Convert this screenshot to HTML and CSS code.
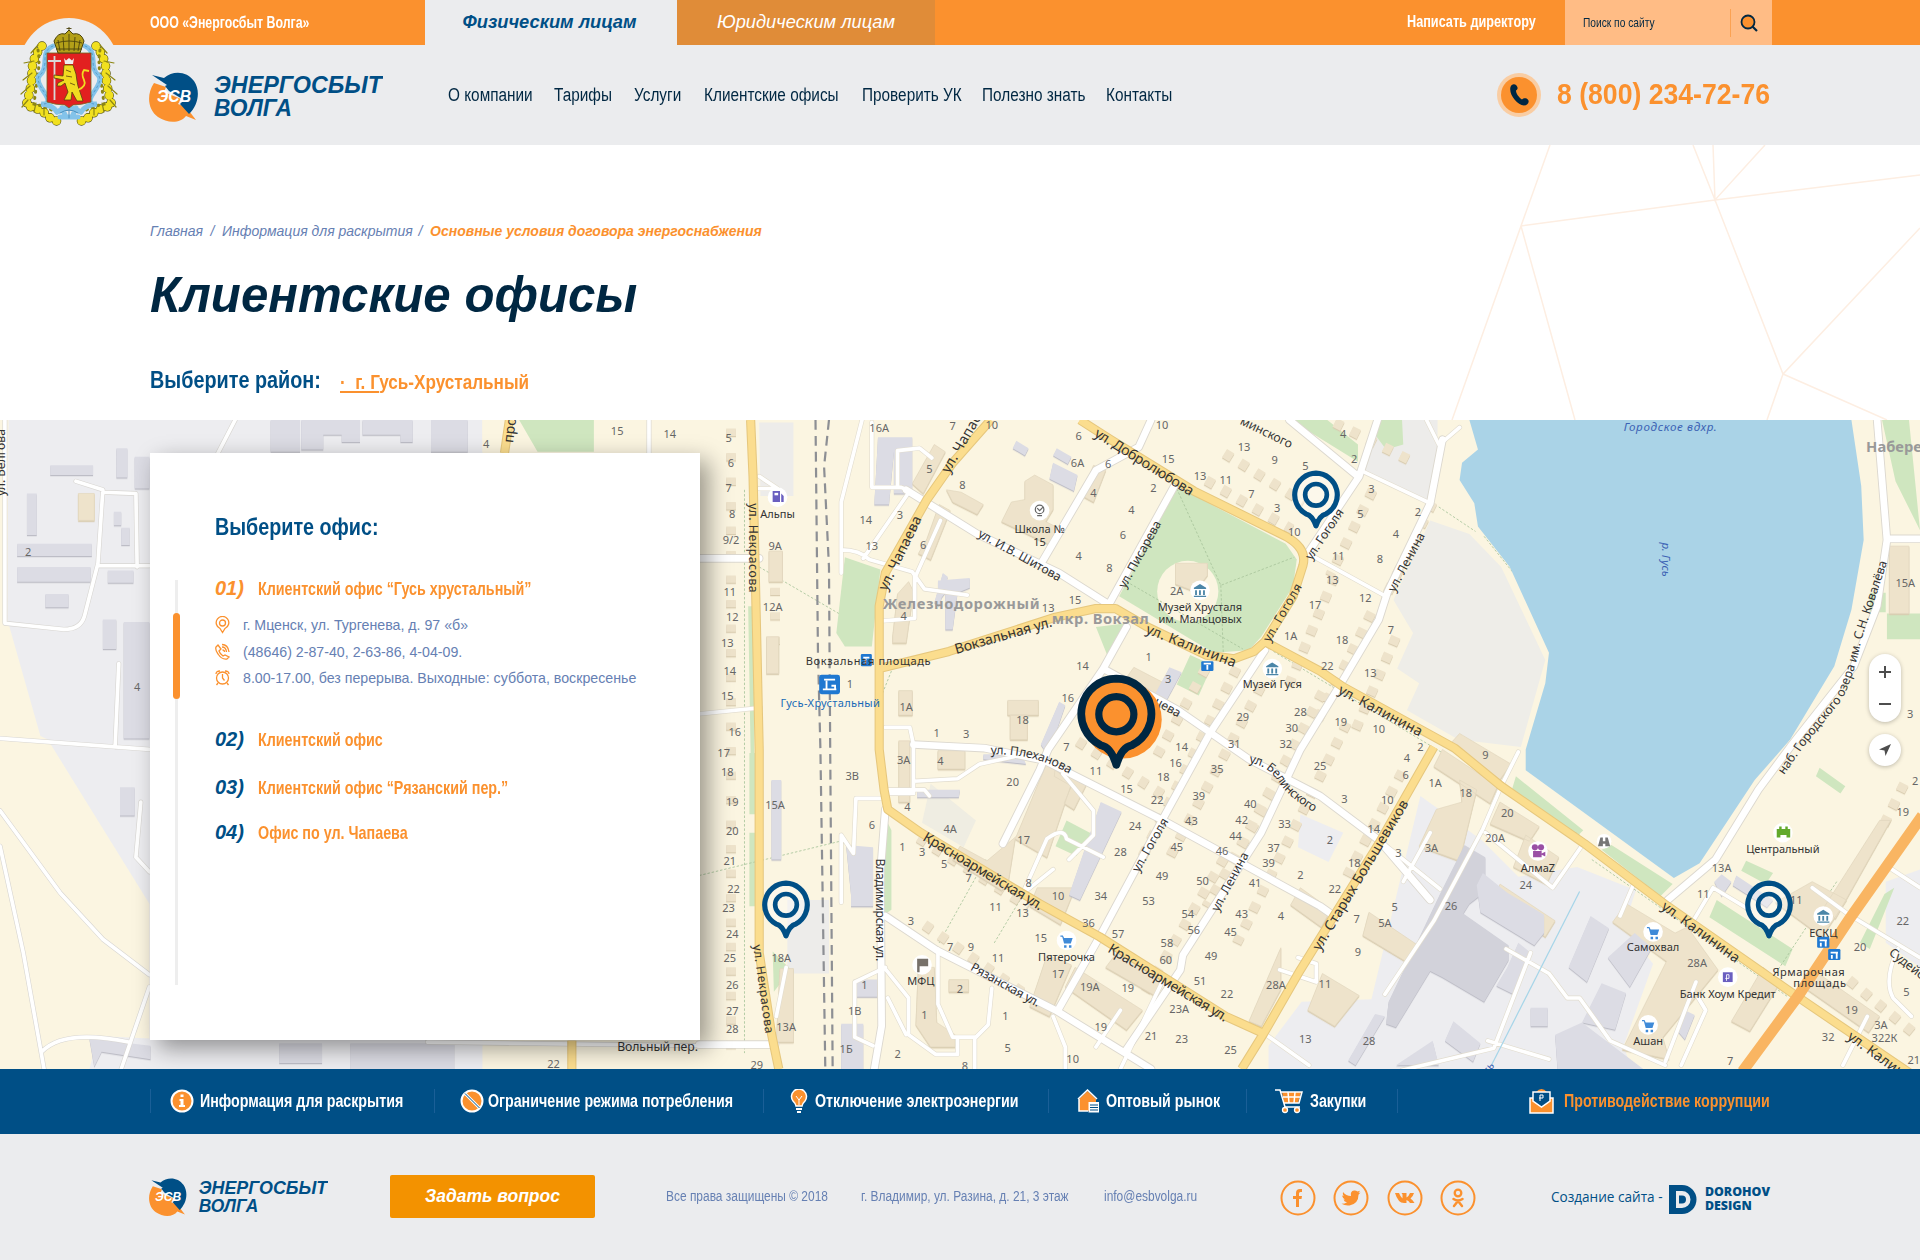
FILE: index.html
```
<!DOCTYPE html>
<html lang="ru">
<head>
<meta charset="utf-8">
<title>Клиентские офисы — Энергосбыт Волга</title>
<link rel="stylesheet" href="styles.css">
</head>
<body>
<svg class="defs" width="0" height="0" aria-hidden="true">
  <symbol id="logo" viewBox="0 0 234 52">
    <path fill="#fb912e" d="M5 12C-3 24-1 39 9 46C19 53 32 52 37 45L47 49L37 36L29 33L32 28L15 21L17 16Z"/>
    <path fill="#004f86" d="M3 4L15 7C24-1 38 0 45 10C52 20 49 35 40 43L31 33L35 29L20 20L16 15L18 14Z"/>
    <text class="logo-mark" x="8" y="31" textLength="34" lengthAdjust="spacingAndGlyphs">ЭСВ</text>
    <text class="logo-name" x="65" y="22" textLength="168" lengthAdjust="spacingAndGlyphs">ЭНЕРГОСБЫТ</text>
    <text class="logo-name" x="65" y="45" textLength="78" lengthAdjust="spacingAndGlyphs">ВОЛГА</text>
  </symbol>
  <symbol id="pin" viewBox="0 0 48 58">
    <path d="M24 3a21 21 0 0 1 9.500 39.500q-6 1.500-9.500 11.500q-3.500-10-9.500-11.500A21 21 0 0 1 24 3z" fill="#fff" fill-opacity=".35" stroke="#004f86" stroke-width="5" stroke-linejoin="round"/>
    <circle cx="24" cy="24" r="10.500" fill="none" stroke="#004f86" stroke-width="4.500"/>
  </symbol>
</svg>

<header class="header">
  <div class="topbar">
    <span class="company">ООО «Энергосбыт Волга»</span>
    <a class="tab tab-active">Физическим лицам</a>
    <a class="tab tab-legal">Юридическим лицам</a>
    <a class="director">Написать директору</a>
    <div class="search">
      <span class="search-text">Поиск по сайту</span>
      <i class="search-line"></i>
      <svg class="search-icon" width="20" height="20" viewBox="0 0 20 20"><circle cx="9" cy="9" r="6.500" fill="#fb912e" stroke="#002742" stroke-width="1.800"/><path d="M13.500 13.500L18 18" stroke="#002742" stroke-width="2.200"/></svg>
    </div>
  </div>
  <div class="mainbar">
    <svg class="logo" width="234" height="52"><use href="#logo"/></svg>
    <nav class="nav">
      <a class="w84">О компании</a><a class="w58">Тарифы</a><a class="w48">Услуги</a><a class="w136">Клиентские офисы</a><a class="w98">Проверить УК</a><a class="w102">Полезно знать</a><a class="w66">Контакты</a>
    </nav>
    <svg class="phone-icon" width="44" height="44" viewBox="0 0 44 44"><circle cx="22" cy="22" r="22" fill="#f9cda3"/><circle cx="22" cy="22" r="18" fill="#fb912e"/><path d="M13.500 14c1-3 4-3.500 6-1.500c2 2.500 1 4-.5 5c0 3 3 7 6 9c1.500-1.500 5-2 6.500 1c.8 2.500-1.500 5-4.500 5C20 32 11.500 21 13.500 14z" fill="#002742"/></svg>
    <span class="phone">8 (800) 234-72-76</span>
  </div>
  <svg class="arms" width="102" height="112" viewBox="18 16 102 112">
    <circle cx="69" cy="68" r="50" fill="#ebecee"/>
    <g fill="none" stroke-linecap="round">
      <path d="M42 46Q32 58 32 72T26 106Q40 108 48 116T62 119M96 46Q106 58 106 72T112 106Q98 108 90 116T76 119" stroke="#55520e" stroke-width="9.500" stroke-dasharray="0 7.500"/>
      <path d="M42 46Q32 58 32 72T26 106Q40 108 48 116T62 119M96 46Q106 58 106 72T112 106Q98 108 90 116T76 119" stroke="#f1e01f" stroke-width="8.200" stroke-dasharray="0 7.500"/>
      <path d="M38 45l-7 8m3 8l-10 2m8 10l-9 7m7 6l-9 8m7 6l-6 7m14-4l-2 9m10-5v8M100 45l7 8m-3 8l10 2m-8 10l9 7m-7 6l9 8m-7 6l6 7m-14-4l2 9m-10-5v8" stroke="#8d8614" stroke-width="1.200"/>
      <path d="M38 50Q40 60 38 74T34 104Q44 106 56 112M100 50Q98 60 100 74T104 104Q94 106 82 112" stroke="#8d8614" stroke-width="3" stroke-dasharray="1 5"/>
      <path d="M53 46q-8 3-8 14t-5 15t4 17t-3 12q12 1 16 8M85 46q8 3 8 14t5 15t-4 17t3 12q-12 1-16 8" stroke="#83c3ea" stroke-width="5"/>
      <path d="M53 46q-8 3-8 14t-5 15t4 17t-3 12M85 46q8 3 8 14t5 15t-4 17t3 12" stroke="#4b8fbd" stroke-width=".8" stroke-dasharray="2 3"/>
      <path d="M57 112q12-8 24 0M62 108l4 9m10-9l-4 9M60 117h18" stroke="#83c3ea" stroke-width="5"/>
      <path d="M60 113q9-6 18 0M69 110v8" stroke="#4b8fbd" stroke-width="1"/>
    </g>
    <path d="M47 53h44v49q-10 3-18 3l-4 3l-4-3q-9 0-18-3z" fill="#e22020" stroke="#6f6420" stroke-width=".8"/>
    <path d="M58 53l-4-12q4-9 11-7l4-4l4 4q8-2 11 7l-4 12z" fill="#b3a018" stroke="#4b430c"/>
    <path d="M69 31v-4m-2.500 1.500h5M60 51l-2-11m6 11l-1-14m6 14v-17m5 17l1-14m3 14l2-11M56 49h26M56 43q13-4 26 0" stroke="#4b430c" fill="none" stroke-width=".9"/>
    <path d="M54.500 56v44M48 61h13" stroke="#d8d8d8" stroke-width="1.800"/>
    <path d="M64 58l2 2.500 3-2.500 3 2.500 2-2.500-1 6h-8z" fill="#eee"/>
    <path d="M64 65h9l3 9q1 8 2 12l5 15h-6l-5-9-1 8h-7l4-8-3-9-4 3h-4l1-3 6-3-10-2v-3l9 1z" fill="#f1dc20" stroke="#58420e" stroke-width=".8"/>
    <path d="M78 90q9-4 6-10t0-10l5 1" fill="none" stroke="#f1dc20" stroke-width="1.800"/>
    <path d="M66 70l5 2m-5 4l6 1m-2 6l5 2" stroke="#58420e" stroke-width=".8"/>
  </svg>
</header>

<main>
  <section class="intro">
    <svg class="mesh" width="470" height="275" viewBox="1450 145 470 275" fill="none" stroke="#fdeee2" stroke-width="1.500"><path d="M1550 145L1521 226L1452 420M1521 226L1575 420M1521 226L1715 200L1920 175M1693 145L1715 200L1783 374L1920 228M1713 145L1715 200L1765 145M1783 374L1767 420M1783 374L1887 420"/></svg>
    <div class="crumbs"><span class="w53">Главная</span><i class="slash">/</i><span class="w188">Информация для раскрытия</span><i class="slash">/</i><b>Основные условия договора энергоснабжения</b></div>
    <h1>Клиентские офисы</h1>
    <div class="district"><span class="district-label">Выберите район:</span><a class="district-name"><u>·&nbsp; г. Г</u>усь-Хрустальный</a></div>
  </section>

  <section class="map">
    <svg class="map-canvas" width="1920" height="649" viewBox="0 343 1568 530" preserveAspectRatio="none">
      <defs>
        <path id="streets" d="M940 343L930 365L895 384L851 459M959 397L906 493M920 512L901 546L856 612L849 629L819 689M740 400L798 436L865 468L906 494M1125 343L1110 389L1068 452M1033 531L988 599L949 670L898 765L864 825M1178 359L1168 411L1133 484L1126 506L1097 555L1062 612L1030 680L966 780L964 792L920 857M746 608L804 611L853 621L950 670L1078 740L1091 749M901 546L962 580L1020 620L1078 650L1126 686L1168 735M723 748L765 776L862 825L940 873M723 661L719 713L720 838L714 873M571 456h49M571 853h62M1533 343L1541 441L1533 495L1514 544L1462 610L1436 645L1401 702L1362 735M1541 440h27M1053 343l56 46"/>
        <path id="lanes" d="M4 343V509L52 514Q66 514 69 503L80 460L84 400L62 393M84 402L111 403L112 463M81 462H122M97 542L94 610M0 603L122 612M0 662L49 729L84 767L122 796M0 691L19 778L36 873M122 806L99 873M34 859Q52 840 105 851M115 655L111 700L122 712M349 851L571 854M530 343v30M178 370l14-27"/>
        <path id="drives" d="M704 343L687 410V468M712 345V398h24l7 3L705 456M733 398V368l18-2l10 8M687 449q15 0 23 8l35 10l10 14l35 5M747 470v35l-26 2M768 425l-20 45M620 389l15 10h-15M571 583l50-5M723 594h20l3 14v40h-22M725 645h30l4 5M746 638l36-2l18-12l28-6M719 652h-20l-2 45l-10-15v55M723 790l-25 12v45l15 7M722 790l20 25v30l22 16h18v-14h15l10-10l3-30M766 775v45l12 27h18v26M642 790l-8 40M860 710l-25 20l20-45q14-10 16 0l30 15M868 632l25 30v20l-20 20M895 855l20-30M860 830l10 25v18M950 800l-35 73M1113 385l55 26M1068 452l62 34M1168 411l10-50l14-12M1165 343l10 20M1226 642l-15 35l-40 75l-40 60M1240 614l-15 30M1213 680l55 45l25-36M1126 686l50 40M1168 680l-22 40M1335 720l-12 28M1384 750l15-25l30 18M1230 775l35 20l15 20h10l25 35l45 20M1250 778l-30 78l-75 18M1215 850l50 15M1480 725l30 22l58 35M1545 710l23 15M1525 830l-20 40M1385 802l-25 65M1387 815l6 10l-20 45M740 845l-15-30M1034 845l35 25M1060 782l15 5v15l-30-10M1550 775q-12 25-4 40l15 15"/>
        <path id="avenues" d="M613 343L615 389L620 612V778L630 844L636 873M809 343L778 378L757 408L723 468L718 495V612L722 645L725 661L752 680L849 738L898 765L1001 830L1032 844M718 546L775 532L862 504L895 497H911L937 512L985 535L1008 538L1024 532L1033 524L1078 548L1097 561L1188 611L1226 642L1294 689L1359 738L1468 814L1568 882M882 343L907 359L975 401L1050 438Q1068 448 1064 462L1056 487L1033 524M1171 610L1126 689L1062 792L1032 844L1014 873M416 343L412 370M467 850v23"/>
      </defs>
      <rect x="0" y="343" width="1568" height="530" fill="#fbf5e1"/>
      <!-- quarters -->
      <g fill="#ededf0">
        <path d="M7 343H394V873H73L80 846L122 848V738L39 604L33 601L6 506z"/>
        <path d="M620 345h28v60h-27zM1123 343h51v19l-6 49l-55-27zM643 735h34v60h-34z" fill="#edecea"/>
        <path d="M1168 425l32 11l26 27l36 76l-20 71l-51-6l-42-24l10-22l-18-12l13-29l-16-27z" fill="#eeede8"/>
        <path d="M1160 650l50 36l30 30l48-8l48 19l-10 30l24 30l-24 67l10 30H1036v-30l27-36l57-2z"/>
        <path d="M760 640l37 30l-10 22l-34-20z" fill="#efede2"/>
        <path d="M1062 665l35 15l-12 24l-25-12zM1540 720l28-10v80l-28-20z"/>
      </g>
      <path d="M394 343h30v26h-30zM485 343h87v26h-87z" fill="#fbf5e1"/>
      <!-- greenery -->
      <g fill="#cfe6bf">
        <path d="M961 399L972 403L1050 444L1059 457L1056 479L1030 520L1020 531L991 533L969 520L914 487z"/>
        <path d="M690 455l29 10l-7 63h-22l-7-11z"/>
        <path d="M424 343h61v26h-46zM895 512l25-3l-15 28zM972 535l18 8l-11 25l-18-9zM1054 343h30l25 20v14z"/>
        <path d="M1127 343h18l1 20l-14 4l-9-12zM723 668l5 10v65l-6 4zM871 670l21 11l-13 18l-17-8zM611 495h5v120h-3zM612 615h5v50h-5zM612 680h5v60h-5z"/>
        <path d="M1238 634l55 44l-6 6l-52-40zM1316 690l50 32l-10 10l-48-38zM1402 735l62 40l-6 14l-62-40zM1537 343h22l9 90l-20-40z"/>
        <path d="M1426 703l22 10l-6 9l-20-11zM1486 627l21 15l-4 6l-20-14zM1527 484h13v16h-13zM1541 501h27v21h-27zM1519 770l20-40l8-5l-20 50zM631 777l15 15l-14 18z"/>
      </g>
      <circle cx="970" cy="483" r="25" fill="#fbf5e1"/>
      <g stroke="#a9c59c" stroke-width=".7" fill="none" stroke-dasharray="2 1.500"><path d="M961 399l36 79l60-23M997 478l2 55M920 475l95 55M620 463l65 38M571 715l115-28M1040 532l250 150M1300 702l160 112M728 548l-8 20v40M1212 438l40 50l17 50l-20 70M1175 414l30 20M608 400v460M1500 720l-60 90M812 770l30-50M767 770l38-68"/></g>
      <path d="M1200 343L1207 367L1194 378L1192 392L1204 411L1207 430L1233 463L1265 533L1262 558L1246 612V629L1367 717L1388 705L1433 637L1462 604L1498 544L1512 498L1522 441L1520 397L1512 343z" fill="#aad3e7"/>
      <!-- buildings along the streets -->
      <g fill="none" stroke="#eee3cb" stroke-width="8" stroke-dasharray="7 8" class="houses">
        <path d="M597 350V860M633 460v70" stroke-dasharray="6 14"/>
        <path d="M985 392l70 40M1000 370l65 40M1121 400l-35 70M1170 410l-40 80M1090 470l-40 95M1120 500l-45 90M1140 520l-35 80M1030 560l-75 140M1010 545l-80 160M1080 565l-80 150M1055 620l-70 120M1100 590l-90 180M1000 700l-65 110M1145 630l-45 85M880 605l70 44M750 684l90 56M755 755l80 55"/>
        <path d="M985 545l-42 75M1510 800l55 45M1555 640l-20 40M1090 345l60 30" />
      </g>
      <g fill="#eee3cb" stroke="#e3d8bf" stroke-width=".6" class="houses">
        <path d="M837 408v-15l8-5l15 8v20l-6 10l12 6l-6 14l-42-20l8-16zM745 395l18-32l9 6l-18 34zM757 440l10-28l9 5l-16 40l-10-5zM729 520l4-35l9-10l4 8l-6 42h-11zM773 400l12 2l18 10l-5 8l-20-10zM893 380l10 4l-10 26l-9-5zM960 460h26v10l-10 13l-16-6z"/>
        <path d="M64 403h13v22H64zM628 450h11v25h-11zM626 520h10v30h-10zM734 564h11v20h-11z"/>
        <path d="M766 613h22v15h-22zM734 605h9v50h-9zM823 572h25v12h-25zM825 584h14v20h-14zM875 640l-20 60l-26-15l-6 38l-5 4l-40-25l6-11l22 12l24-20l25-60zM862 625l25 16l-10 20l-8-5l6-14l-14-8zM878 725l-12 30l-25-15l6-15zM926 545l27 14l-5 10l-10-5l-5 14l-9-3l4-14l-10-5z"/>
        <path d="M855 780l20 8l-18 42l-16-8zM878 790l55 35l-13 16l-50-35zM912 778l38 22l-7 13l-40-23zM750 790h13l2 45l15 10v10h-20l-12-18zM637 791h11v60h-14zM775 800h16v10h-16z"/>
        <path d="M1194 655l-2-18l14 8l-14 58l-33-12l14-30zM1178 612l45 30l-6 14l-46-30zM1225 655l32 20l-8 12l-32-14zM1246 682l27 18l-10 22l-27-14zM1225 722l45 30l-8 13l-42-28zM1118 745l40 27l-5 16l-40-24zM1068 825l12-30l30 18l-20 25zM1046 808l-16 30l-10-4l26-60z"/>
        <path d="M1328 738l40 24l10-5l25 35l-45 55l5 18l-38-8l36-72l-44-32zM1440 790l14 12l-25 40l-15-8zM1535 670h9l-45 80l-10-8zM1543 446h16v55h-16zM1480 720l28 15l-20 30l-38-28zM1485 795l50 35l-9 13l-50-35zM1192 599l42 25l-10 14l-42-28zM1062 725l25 18l-8 14l-25-18z"/>
      </g>
      <g fill="#dcdce4" class="works">
        <path d="M717 357h28v46h-15v-34l-4 43h-12zM41 380h35v8H41zM95 366h9v24h-9zM22 403h8v34h-8zM93 418h6v11h-6zM99 431h7v14h-7zM14 444h61v10H14zM14 463h60v12H14zM88 466h21v10H88zM37 485h19v11H37zM84 506h11v24H84zM101 508h21v95h-21zM110 373h12v26h-12zM98 643h12v23H98z"/>
        <path d="M221 343h24v26h-24zM246 343h48v18h-15v-6h-15v12h-18zM296 343h41v18h-10v-6h-31zM352 343h30v26h-30zM73 848l50 6v11l-40-6l-6 12zM228 852h35v16h-35zM286 852h85v21h-85z"/>
        <path d="M860 378l20 10l-3 13l-20-10zM830 360l10 6l-3 6l-10-6zM863 366l12 7l-3 6l-12-7zM766 492v-18l26-2v8l-10 4l-4 30h-6v-30zM763 492l7-24l4 3l-7 24zM850 608l15-35l5 3l-14 41zM630 637h8v65h-8zM691 690l22 2v48h-18v-10zM697 800h20v14h-20zM687 836h18v37h-18zM899 655l17 8l-34 72l-9-4zM803 616h31l4 8l-35-4zM749 645h35l-1 6h-34zM955 545l10 4l-14 26l-10-4z"/>
        <path fill="#d2d2da" d="M1196 690l17 10v28l-13 10l-5 8l37 26v12l-20 34l-34-20l-10-5l-28 46l-8-3l2-18l42-88z"/>
        <path d="M1206 723l5-10l20 16l30 18v15l-8 10l-44-27zM1231 790l9-20l10 8l-14 34l-14-7zM1281 790l18-42l15 10l-18 44zM1313 782l22-20l14 12l-18 32zM1292 835l16-32l20 8l-9 30zM1250 823h14v15h-14zM1180 850l7-16l22 18l-6 15zM1131 830l-24 40l-6-4l22-38zM1270 845l22-10l50 38h-70zM1170 850l-30 20h35zM1418 715l30 20l-5 6l-28-18zM1370 842l6-17l8 4l-8 20zM1400 720l6 12l8-12l-8-6z"/>
      </g>
      <!-- white streets -->
      <g fill="none" stroke-linejoin="round" stroke-linecap="round">
        <use href="#drives" stroke="#e2ddcf" stroke-width="4"/>
        <use href="#lanes" stroke="#d8d6d2" stroke-width="4"/>
        <use href="#streets" stroke="#dcd8cf" stroke-width="7"/>
        <use href="#drives" stroke="#fff" stroke-width="3"/>
        <use href="#lanes" stroke="#fff" stroke-width="3"/>
        <use href="#streets" stroke="#fff" stroke-width="5.500"/>
      </g>
      <!-- main streets -->
      <g fill="none" stroke-linejoin="round">
        <use href="#avenues" stroke="#e6c77d" stroke-width="7.500"/>
        <use href="#avenues" stroke="#fbdd8e" stroke-width="5.800"/>
      </g>
      <path d="M1570 666L1510 751L1468 814L1423 875" fill="none" stroke="#f9b562" stroke-width="9"/>
      <path d="M1290 728L1218 870" stroke="#a6d5e8"/>
      <g fill="none" stroke="#8d8f94" stroke-width="1.800" stroke-dasharray="8 5"><path d="M666 343L668 533L670 612L674 873M677 343L673 381L677 463L678 612L680 873"/></g>

      <!-- street names -->
      <path id="s-pleh" d="M809 616Q845 615 873 632" fill="none"/><path id="s-bel" d="M1020 623Q1036 625 1045 640Q1054 652 1074 664" fill="none"/><path id="s-nab" d="M1457 633L1472 611L1504 572Q1515 550 1520 523L1541 460" fill="none"/>
      <g class="street">
        <text><textPath href="#s-pleh" textLength="67">ул. Плеханова</textPath></text>
        <text><textPath href="#s-bel" textLength="68">ул. Белинского</textPath></text>
        <text><textPath href="#s-nab" textLength="196">наб. Городского озера им. С.Н. Ковалёва</textPath></text>
        <text transform="translate(919 481) rotate(-61)" textLength="61">ул. Писарева</text>
        <text transform="translate(798 438) rotate(29)" textLength="76">ул. И.В. Шитова</text>
        <text transform="translate(612 411) rotate(90)" textLength="73">ул. Некрасова</text>
        <text transform="translate(615 772) rotate(82)" textLength="73">ул. Некрасова</text>
        <text transform="translate(715 701) rotate(90)" textLength="84">Владимирская ул.</text>
        <text transform="translate(792 792) rotate(29)" textLength="63">Рязанская ул.</text>
        <text transform="translate(1037 525) rotate(-60)" textLength="53">ул. Гоголя</text>
        <text transform="translate(1071 458) rotate(-56)" textLength="48">ул. Гоголя</text>
        <text transform="translate(930 713) rotate(-60)" textLength="49">ул. Гоголя</text>
        <text transform="translate(1139 484) rotate(-62)" textLength="53">ул. Ленина</text>
        <text transform="translate(995 745) rotate(-62)" textLength="53">ул. Ленина</text>
        <text transform="translate(942 575) rotate(29)">цева</text>
        <text transform="translate(1012 346) rotate(26)">минского</text>
        <text transform="translate(1542 779) rotate(38)">Судейс</text>
        <text transform="translate(4 405) rotate(-90)">ул. Белгова</text>
        <text x="504" y="858" textLength="66">Вольный пер.</text>
      </g>
      <g class="street big">
        <text transform="translate(781 534) rotate(-16)" textLength="82">Вокзальная ул.</text>
        <text transform="translate(935 517) rotate(21)" textLength="78">ул. Калинина</text>
        <text transform="translate(1092 566) rotate(28)" textLength="76">ул. Калинина</text>
        <text transform="translate(1356 742) rotate(36)" textLength="76">ул. Калинина</text>
        <text transform="translate(1508 848) rotate(36)" textLength="76">ул. Калинина</text>
        <text transform="translate(893 356) rotate(32)" textLength="93">ул. Добролюбова</text>
        <text transform="translate(775 387) rotate(-60)" textLength="67">ул. Чапаева</text>
        <text transform="translate(724 483) rotate(-64)" textLength="66">ул. Чапаева</text>
        <text transform="translate(753 686) rotate(31)" textLength="112">Красноармейская ул.</text>
        <text transform="translate(904 777) rotate(31)" textLength="112">Красноармейская ул.</text>
        <text transform="translate(1078 777) rotate(-59)" textLength="141">ул. Старых Большевиков</text>
        <text transform="translate(419 362) rotate(-83)">про</text>
      </g>
      <g class="area"><text x="721" y="497" textLength="128">Железнодорожный</text><text x="859" y="510" textLength="79">мкр. Вокзал</text><text x="1524" y="369">Набере</text></g>
      <g class="water"><text x="1326" y="352" textLength="76">Городское вдхр.</text><text transform="translate(1357 443) rotate(90)">р. Гусь</text><text transform="translate(1216 878) rotate(-60)">сь</text></g>
      <!-- places -->
      <g fill="#fff"><circle cx="635" cy="406" r="8"/><circle cx="849" cy="417" r="8"/><circle cx="980" cy="482" r="8"/><circle cx="1039" cy="546" r="8"/><circle cx="871" cy="768" r="8"/><circle cx="753" cy="788" r="8"/><circle cx="1256" cy="695" r="8"/><circle cx="1456" cy="680" r="8"/><circle cx="1350" cy="761" r="8"/><circle cx="1411" cy="798" r="8"/><circle cx="1346" cy="837" r="8"/><circle cx="1489" cy="748" r="8"/><circle cx="1310" cy="687" r="6"/></g>
      <path d="M631 401h6v9h-6zM638 403l2 2v5h-2" fill="#6a5fc0"/><path d="M632.500 402.500h3v2h-3z" fill="#fff"/>
      <g fill="none" stroke="#666"><circle cx="849" cy="416" r="3.500"/><path d="M847 415l2 2 3-3M847 421h4"/></g>
      <g fill="#4b86a8"><path id="museum" d="M975 480l5-3l5 3v1h-10zM976 482h1.500v4H976zM979.200 482h1.500v4h-1.500zM982.500 482h1.500v4h-1.500zM975 486.500h10v1h-10z"/><use href="#museum" x="59" y="64"/><use href="#museum" x="509" y="266"/></g>
      <g fill="#3f8ad8"><path id="cart" d="M866 764h2l1 2h7l-1.500 4.500h-5.500l-1.500-5.500h-1.500zM869 772h2v2h-2zM873 772h2v2h-2z"/><use href="#cart" x="479" y="-7"/><use href="#cart" x="475" y="69"/></g>
      <path d="M749 783h9v6h-7v5h-2z" fill="#77716a"/>
      <g fill="#9a4fa5"><circle cx="1253.500" cy="692" r="2.500"/><circle cx="1258.500" cy="692" r="2.500"/><path d="M1252 695h7v5h-7zM1259 697l3-1.500v4l-3-1.500"/></g>
      <path d="M1451 677h2v-2h2v2h3v-2h2v2h2v7h-3v-2h-5v2h-3z" fill="#62a92c"/>
      <path d="M1407 794h8v8h-8z" fill="#6a5fc0"/><path d="M1410 801v-5h2v3h-3" stroke="#fff" fill="none" stroke-width=".7"/><path d="M1305 691l2-7h2v3h2v-3h2l2 7h-4v-2h-2v2z" fill="#777"/>
      <g fill="#1f78d1"><rect x="669" y="551" width="17" height="16" rx="2"/><rect x="703" y="534" width="9" height="10" rx="1"/><rect x="981" y="540" width="10" height="8" rx="1"/><rect x="1484" y="765" width="10" height="9" rx="1"/><rect x="1493" y="775" width="10" height="9" rx="1"/></g>
      <path d="M673 555h9M675 556v7M672 563h11M679 560h3v3M705 537h5M707 538v4M983 542h6M986 543v4M1486 768h6M1491 768v5M1487 770v3M1495 778h6M1500 778v5M1496 780v3" stroke="#fff" stroke-width="1.500" fill="none"/>
      <g class="poi">
        <text x="635" y="423">Альпы</text><text x="849" y="435">Школа №</text><text x="849" y="446">15</text><text x="980" y="499">Музей Хрусталя</text><text x="980" y="509">им. Мальцовых</text><text x="1039" y="562">Музей Гуся</text><text x="709" y="543" textLength="102">Вокзальная площадь</text><text x="678" y="577" textLength="81" fill="#1669b7">Гусь-Хрустальный</text><text x="871" y="785">Пятерочка</text><text x="752" y="804">МФЦ</text><text x="1256" y="712">АлмаZ</text><text x="1456" y="697">Центральный</text><text x="1350" y="777">Самохвал</text><text x="1411" y="815">Банк Хоум Кредит</text><text x="1346" y="853">Ашан</text><text x="1489" y="765">ЕСКЦ</text><text x="1477" y="797" textLength="59">Ярмарочная</text><text x="1486" y="806" textLength="43">площадь</text>
      </g>

      <!-- house numbers -->
      <g class="num">
        <text x="504" y="355">15</text><text x="547" y="358">14</text><text x="397" y="366">4</text><text x="23" y="454">2</text><text x="112" y="564">4</text><text x="452" y="872">22</text>
        <text x="595" y="361">5</text><text x="597" y="381">6</text><text x="595" y="402">7</text><text x="598" y="423">8</text><text x="597" y="444">9/2</text><text x="633" y="449">9А</text><text x="596" y="487">11</text><text x="598" y="507">12</text><text x="631" y="499">12А</text><text x="594" y="528">13</text><text x="596" y="551">14</text><text x="594" y="572">15</text><text x="600" y="601">16</text><text x="591" y="618">17</text><text x="594" y="634">18</text><text x="598" y="658">19</text><text x="633" y="661">15А</text><text x="598" y="682">20</text><text x="596" y="706">21</text><text x="599" y="729">22</text><text x="595" y="745">23</text><text x="598" y="766">24</text><text x="596" y="786">25</text><text x="638" y="786">18А</text><text x="598" y="808">26</text><text x="598" y="829">27</text><text x="598" y="844">28</text><text x="642" y="842">13А</text><text x="618" y="873">29</text>
        <text x="718" y="353">16А</text><text x="778" y="351">7</text><text x="810" y="350">10</text><text x="759" y="386">5</text><text x="786" y="399">8</text><text x="735" y="424">3</text><text x="707" y="428">14</text><text x="712" y="449">13</text><text x="754" y="448">6</text><text x="881" y="359">6</text><text x="880" y="381">6А</text><text x="905" y="382">6</text><text x="893" y="406">4</text><text x="942" y="402">2</text><text x="924" y="420">4</text><text x="917" y="440">6</text><text x="881" y="457">4</text><text x="906" y="467">8</text><text x="961" y="486">2А</text><text x="878" y="493">15</text><text x="856" y="500">13</text><text x="738" y="506">4</text>
        <text x="949" y="350">10</text><text x="954" y="378">15</text><text x="980" y="392">13</text><text x="1001" y="395">11</text><text x="1022" y="407">7</text><text x="1043" y="418">3</text><text x="1016" y="368">13</text><text x="1041" y="379">9</text><text x="1066" y="384">5</text><text x="1057" y="438">10</text><text x="1097" y="358">4</text><text x="1106" y="378">2</text><text x="1120" y="403">3</text><text x="1111" y="423">5</text><text x="1158" y="421">2</text><text x="1140" y="439">4</text><text x="1127" y="460">8</text><text x="1093" y="457">11</text><text x="1088" y="477">13</text><text x="1074" y="497">17</text><text x="1115" y="492">12</text><text x="1136" y="518">7</text><text x="1096" y="526">18</text><text x="1084" y="547">22</text><text x="1119" y="553">13</text><text x="1054" y="523">1А</text><text x="1556" y="479">15А</text><text x="1560" y="586">3</text>
        <text x="938" y="540">1</text><text x="954" y="558">3</text><text x="884" y="547">14</text><text x="872" y="573">16</text><text x="740" y="581">1А</text><text x="694" y="562">1</text><text x="765" y="602">1</text><text x="789" y="603">3</text><text x="835" y="591">18</text><text x="871" y="613">7</text><text x="965" y="613">14</text><text x="960" y="626">16</text><text x="950" y="638">18</text><text x="945" y="657">22</text><text x="895" y="633">11</text><text x="920" y="648">15</text><text x="1062" y="585">28</text><text x="1055" y="598">30</text><text x="1050" y="611">32</text><text x="1015" y="589">29</text><text x="1008" y="611">31</text><text x="1095" y="593">19</text><text x="1126" y="599">10</text>
        <text x="738" y="624">3А</text><text x="768" y="625">4</text><text x="696" y="637">3В</text><text x="827" y="642">20</text><text x="741" y="662">4</text><text x="776" y="680">4А</text><text x="712" y="677">6</text><text x="737" y="695">1</text><text x="753" y="699">3</text><text x="771" y="709">5</text><text x="791" y="720">7</text><text x="836" y="689">17</text><text x="840" y="724">8</text><text x="864" y="735">10</text><text x="813" y="744">11</text><text x="835" y="749">13</text><text x="850" y="769">15</text><text x="744" y="755">3</text><text x="776" y="777">7</text><text x="793" y="777">9</text><text x="815" y="786">11</text><text x="889" y="757">36</text><text x="899" y="735">34</text><text x="915" y="699">28</text><text x="927" y="678">24</text><text x="973" y="674">43</text><text x="979" y="653">39</text><text x="994" y="631">35</text><text x="961" y="695">45</text><text x="949" y="719">49</text><text x="938" y="739">53</text><text x="913" y="766">57</text><text x="1021" y="660">40</text><text x="1014" y="673">42</text><text x="1009" y="686">44</text><text x="998" y="698">46</text><text x="982" y="723">50</text><text x="970" y="750">54</text><text x="975" y="763">56</text><text x="953" y="773">58</text><text x="952" y="787">60</text><text x="1049" y="676">33</text><text x="1040" y="696">37</text><text x="1036" y="708">39</text><text x="1025" y="724">41</text><text x="1014" y="750">43</text><text x="1005" y="764">45</text><text x="989" y="784">49</text><text x="980" y="804">51</text><text x="1062" y="718">2</text><text x="1046" y="751">4</text><text x="1042" y="808">28А</text><text x="1002" y="815">22</text><text x="963" y="827">23А</text><text x="890" y="809">19А</text><text x="921" y="810">19</text><text x="864" y="799">17</text><text x="899" y="842">19</text><text x="940" y="849">21</text><text x="965" y="852">23</text><text x="1005" y="861">25</text><text x="1066" y="852">13</text><text x="876" y="868">10</text><text x="823" y="859">5</text><text x="821" y="833">1</text><text x="784" y="811">2</text><text x="755" y="832">1</text><text x="706" y="808">1</text><text x="698" y="829">1В</text><text x="691" y="860">1Б</text><text x="733" y="864">2</text><text x="788" y="874">8</text>
        <text x="1078" y="629">25</text><text x="1098" y="656">3</text><text x="1160" y="613">2</text><text x="1149" y="622">4</text><text x="1148" y="636">6</text><text x="1133" y="657">10</text><text x="1122" y="680">14</text><text x="1142" y="700">3</text><text x="1106" y="708">18</text><text x="1086" y="689">2</text><text x="1090" y="729">22</text><text x="1172" y="643">1А</text><text x="1197" y="651">18</text><text x="1213" y="620">9</text><text x="1231" y="667">20</text><text x="1221" y="688">20А</text><text x="1169" y="696">3А</text><text x="1246" y="726">24</text><text x="1185" y="743">26</text><text x="1139" y="744">5</text><text x="1108" y="754">7</text><text x="1131" y="757">5А</text><text x="1109" y="781">9</text><text x="1082" y="807">11</text><text x="1118" y="853">28</text><text x="1406" y="712">13А</text><text x="1391" y="733">11</text><text x="1467" y="738">11</text><text x="1554" y="666">19</text><text x="1564" y="641">2</text><text x="1554" y="755">22</text><text x="1519" y="777">20</text><text x="1386" y="790">28А</text><text x="1557" y="813">5</text><text x="1512" y="828">19</text><text x="1536" y="840">3А</text><text x="1539" y="851">322К</text><text x="1493" y="850">32</text><text x="1413" y="870">7</text><text x="1563" y="869">21</text>
      </g>
    </svg>

    <svg class="pin pin-1" width="50" height="60"><use href="#pin"/></svg>
    <svg class="pin pin-2" width="50" height="60"><use href="#pin"/></svg>
    <svg class="pin pin-3" width="50" height="60"><use href="#pin"/></svg>
    <svg class="pin pin-main" width="93" height="97" viewBox="0 0 90 94">
      <circle cx="46" cy="44" r="38" fill="#fb912e"/>
      <path d="M40 4.500a34 34 0 0 1 15 64.500q-10 2-15 19q-5-17-15-19A34 34 0 0 1 40 4.500z" fill="#fb912e" stroke="#002742" stroke-width="7.500" stroke-linejoin="round"/>
      <circle cx="40" cy="39" r="17" fill="none" stroke="#002742" stroke-width="7"/>
    </svg>
    <div class="zoom"><i class="plus"></i><i class="minus"></i></div>
    <div class="locate"><svg width="14" height="14" viewBox="0 0 14 14"><path d="M1 6.500L13 1L7.500 13L6.500 7.500z" fill="#4d4d4d"/></svg></div>

    <aside class="panel">
      <div class="track"><div class="thumb"></div></div>
      <div class="offices">
        <h2>Выберите офис:</h2>
        <div class="office office-1"><em>01)</em><a>Клиентский офис “Гусь хрустальный”</a></div>
        <ul class="details">
          <li><svg width="15" height="18" viewBox="0 0 15 18" fill="none" stroke="#fb912e" stroke-width="1.300"><path d="M7.500 16.500L5 12.500A6.300 6.300 0 1 1 10 12.500z"/><circle cx="7.500" cy="7" r="3"/></svg><span>г. Мценск, ул. Тургенева, д. 97 «б»</span></li>
          <li><svg width="15" height="18" viewBox="0 0 15 18" fill="none" stroke="#fb912e" stroke-width="1.300"><path d="M1 4l2-2l3 4l-2 2q1 3 4 5l2-1l4 2l-2 2Q7 17 3 11Q0 7 1 4zM7 1.500q6 0 7 7.500M7 4q4 0 4.500 5M7.500 7q2 0 2 2"/></svg><span>(48646) 2-87-40, 2-63-86, 4-04-09.</span></li>
          <li><svg width="15" height="18" viewBox="0 0 15 18" fill="none" stroke="#fb912e" stroke-width="1.300"><circle cx="7.500" cy="9" r="6"/><path d="M7.500 5v4l2 2.500M1 5q0-3 4-3M14 5q0-3-4-3M3 14l-1.500 2M12 14l1.500 2"/></svg><span>8.00-17.00, без перерыва. Выходные: суббота, воскресенье</span></li>
        </ul>
        <div class="office office-2"><em>02)</em><a>Клиентский офис</a></div>
        <div class="office office-3"><em>03)</em><a>Клиентский офис “Рязанский пер.”</a></div>
        <div class="office office-4"><em>04)</em><a>Офис по ул. Чапаева</a></div>
      </div>
    </aside>
  </section>
</main>

<nav class="services">
  <a class="sv sv-1"><svg width="24" height="24" viewBox="0 0 24 24"><circle cx="12" cy="12" r="10.500" fill="#fb912e" stroke="#fff" stroke-width="2"/><path d="M10.500 5.500h3v2.500h-3zM9.500 10h4v6h1.500v2h-6v-2h1.500v-4h-1z" fill="#fff"/></svg><span>Информация для раскрытия</span></a>
  <a class="sv sv-2"><svg width="24" height="24" viewBox="0 0 24 24"><circle cx="12" cy="12" r="10.500" fill="#fb912e" stroke="#fff" stroke-width="2"/><path d="M5 4.500L19.500 19" stroke="#fff" stroke-width="3"/><path d="M5 4.500L19.500 19" stroke="#004f86" stroke-width="1"/></svg><span>Ограничение режима потребления</span></a>
  <a class="sv sv-3"><svg width="18" height="24" viewBox="0 0 18 24"><path d="M6 17q0-2-3-5A7.500 7.500 0 1 1 15 12q-3 3-3 5z" fill="#fb912e" stroke="#fff" stroke-width="1.500"/><path d="M9 16v-6M6 7l3 4 3-4" stroke="#fff" fill="none"/><path d="M6 19h6v2H6zM7 22h4v2H7z" fill="#fff"/></svg><span>Отключение электроэнергии</span></a>
  <a class="sv sv-4"><svg width="24" height="24" viewBox="0 0 24 24"><path d="M2 10L10.500 2L19 10v12H2z" fill="#fb912e"/><path d="M1 10L10.500 1L20 10M2 10v12h9" fill="none" stroke="#fff" stroke-width="1.500"/><path d="M11.500 13h10.500v10.500H11.500z" fill="#fff"/><path d="M13 16h8M13 18.500h8M13 21h8" stroke="#004f86"/></svg><span>Оптовый рынок</span></a>
  <a class="sv sv-5"><svg width="28" height="25" viewBox="0 0 28 25"><path d="M7 3h19l-3 11H9z" fill="#fb912e"/><path d="M0 1h5l5 17h15M6 3h21l-3 11H9M8 8h17M13 3l1 11M20 3l-1 11" fill="none" stroke="#fff" stroke-width="1.500"/><circle cx="10" cy="21" r="2.500" fill="#fb912e" stroke="#fff" stroke-width="1.300"/><circle cx="22" cy="21" r="2.500" fill="#fb912e" stroke="#fff" stroke-width="1.300"/></svg><span>Закупки</span></a>
  <a class="sv sv-6"><svg width="25" height="25" viewBox="0 0 25 25"><path d="M7 3q5.500-6 11 0" fill="#fb912e"/><path d="M1 9h23v15H1z" fill="#fb912e" stroke="#fff" stroke-width="1.500"/><path d="M4 3h17v9l-8.500 6L4 12z" fill="#004f86" stroke="#fff" stroke-width="1.500"/><path d="M11 12V6h3v3h-4" fill="none" stroke="#fff"/></svg><span>Противодействие коррупции</span></a>
</nav>

<footer class="footer">
  <svg class="footer-logo" width="179" height="40"><use href="#logo"/></svg>
  <a class="ask">Задать вопрос</a>
  <div class="legal"><span class="w162">Все права защищены © 2018</span><span class="w209">г. Владимир, ул. Разина, д. 21, 3 этаж</span><span>info@esbvolga.ru</span></div>
  <div class="social">
    <svg width="36" height="36" viewBox="0 0 36 36"><circle cx="18" cy="18" r="16.500" fill="none" stroke="#fb912e" stroke-width="2"/><path d="M16 27v-8h-3v-3h3v-3q0-4 4-4h2v3h-1.500q-1.500 0-1.500 1.500V16h3l-.5 3H19v8z" fill="#fb912e"/></svg>
    <svg width="36" height="36" viewBox="0 0 36 36"><circle cx="18" cy="18" r="16.500" fill="none" stroke="#fb912e" stroke-width="2"/><path d="M10 12q3 4 8 4q-1-5 3-5.500q2-.3 3.500 1l2.500-.8l-1.500 2.300l2-.5l-2 2.200q0 9-9 10.800q-4.500.5-8-1.700q3.500 0 5.500-1.600q-2.700-.4-3.500-2.800h1.500q-2.500-1.200-3-3.800l1.600.5Q9.300 14.500 10 12z" fill="#fb912e"/></svg>
    <svg width="36" height="36" viewBox="0 0 36 36"><circle cx="18" cy="18" r="16.500" fill="none" stroke="#fb912e" stroke-width="2"/><path d="M8 13h4q1.500 4 3.500 5.500v-4L14.500 13h5v4.500Q22 16 23 13h4q-1 3.500-3.500 5.500q2.500 1.500 4 4.500h-4.500q-1-2-3.500-3V23H17q-6 0-9-10z" fill="#fb912e"/></svg>
    <svg width="36" height="36" viewBox="0 0 36 36" fill="none" stroke="#fb912e"><circle cx="18" cy="18" r="16.500" stroke-width="2"/><circle cx="18" cy="13" r="3.300" stroke-width="2.300"/><path d="M13.500 19q4.500 3 9 0M18 21l-4 5M18 21l4 5" stroke-width="2.500" stroke-linecap="round"/></svg>
  </div>
  <div class="credit"><span class="credit-text">Создание сайта -</span><svg width="28" height="29" viewBox="0 0 28 29"><path d="M0 0h13a14.500 14.500 0 0 1 0 29H0l7-6h6a8.500 8.500 0 0 0 0-17H7v17L0 29z" fill="#004f86"/><path d="M10 10.500h3a4 4 0 0 1 0 8h-3z" fill="#004f86"/></svg><b>DOROHOV<br>DESIGN</b></div>
</footer>
</body>
</html>
```
FILE: styles.css
```
* { box-sizing: border-box; }
body { margin: 0; width: 1920px; height: 1260px; overflow: hidden; background: #fff; font-family: "Liberation Sans", Arial, sans-serif; color: #002742; white-space: nowrap; }
h1, h2, ul { margin: 0; padding: 0; list-style: none; }
svg { display: block; flex: none; }
.defs { position: absolute; }
.logo-mark { font: italic bold 16px "Liberation Sans", sans-serif; fill: #fff; }
.logo-name { font: italic bold 23px "Liberation Sans", sans-serif; fill: #004f86; }

/* condensed lettering: each text is narrowed from its left edge */
.company, .director, .search-text, .nav a, .phone, .district span, .district a, .offices h2, .office a, .sv span, .legal span { transform: scaleX(var(--cond, .8)); transform-origin: 0 50%; }

.header { position: relative; height: 145px; background: #ebecee; }
.topbar { display: flex; height: 45px; padding-left: 150px; background: #fb912e; line-height: 45px; color: #fff; }
.company { --cond: .772; width: 275px; font-size: 16px; font-weight: bold; }
.tab { text-align: center; font-size: 18.300px; font-style: italic; line-height: 43px; }
.tab-active { width: 252px; padding-right: 3px; background: #ebecee; color: #004f86; font-weight: bold; }
.tab-legal { width: 258px; background: #e08c38; }
.director { --cond: .792; width: 158px; margin-left: 472px; line-height: 43px; font-size: 16px; font-weight: bold; }
.search { display: flex; width: 207px; padding: 0 13px 0 18px; background: #ffbc85; color: #002742; font-size: 13px; align-items: center; }
.search-text { --cond: .785; width: 148px; line-height: 43px; }
.search-line { width: 1px; height: 28px; margin-right: 8px; background: #fba252; }
.mainbar { display: flex; height: 100px; padding-left: 149px; align-items: center; }
.logo { margin-top: 4px; }
.nav { --cond: .853; display: flex; gap: 22px; width: 1049px; margin-left: 65px; font-size: 18px; }
.w84 { width: 84px; } .w58 { width: 58px; } .w48 { width: 48px; } .w136 { width: 136px; } .w98 { width: 98px; } .w102 { width: 102px; } .w66 { width: 66px; }
.w53 { width: 53px; } .w188 { width: 189px; } .w162 { width: 161px; } .w209 { width: 209px; }
.phone { --cond: .887; margin: -2px 0 0 16px; font-size: 30px; font-weight: bold; color: #fb912e; }
.arms { position: absolute; left: 18px; top: 16px; }

.intro { position: relative; height: 275px; padding: 77px 0 0 150px; }
.mesh { position: absolute; right: 0; top: 0; }
.crumbs { display: flex; height: 18px; line-height: 18px; font-size: 14px; font-style: italic; color: #6680b3; }
.slash { width: 19px; text-align: center; }
.crumbs b { color: #fb912e; }
h1 { height: 60px; margin-top: 25px; line-height: 60px; font-size: 49.200px; font-style: italic; }
.district { display: flex; margin-top: 37px; height: 36px; line-height: 36px; font-weight: bold; }
.district-label { --cond: .825; width: 190px; font-size: 24px; color: #004f86; }
.district-name { --cond: .815; font-size: 21px; line-height: 39px; color: #fb912e; }

.map { position: relative; height: 649px; padding: 33px 0 0 150px; overflow: hidden; }
.map-canvas { position: absolute; left: 0; top: 0; }
.houses { filter: drop-shadow(0 1.200px 0 #d9ccb0); }
.works { filter: drop-shadow(0 1.800px 0 #bdbdc6); }
.street, .num, .poi, .water, .area { font-family: "Noto Sans", sans-serif; }
.street { font-size: 10px; fill: #333; }
.street.big { font-size: 11.5px; }
.num { font-size: 9px; fill: #666; text-anchor: middle; }
.poi { font-size: 9px; fill: #333; text-anchor: middle; }
.area { font-size: 12px; font-weight: bold; fill: #999; }
.water { font-size: 9.500px; font-style: italic; fill: #3c62b4; }
.pin { position: absolute; }
.pin-1 { left: 1291px; top: 50px; }
.pin-2 { left: 761px; top: 460px; }
.pin-3 { left: 1744px; top: 460px; }
.pin-main { left: 1075px; top: 254px; }
.zoom { position: absolute; left: 1869px; top: 234px; width: 32px; height: 68px; border-radius: 16px; background: #fff; box-shadow: 0 1px 4px rgba(0,0,0,.25); }
.plus, .minus { display: block; width: 12px; height: 2px; margin: 17px 10px 0; background: #4d4d4d; }
.plus::after { content: ""; display: block; width: 2px; height: 12px; margin: 0 5px; background: #4d4d4d; transform: translateY(-5px); }
.minus { margin-top: 30px; }
.locate { position: absolute; left: 1869px; top: 314px; width: 32px; height: 32px; padding: 9px; border-radius: 50%; background: #fff; box-shadow: 0 1px 4px rgba(0,0,0,.25); }

.panel { position: relative; display: flex; width: 550px; height: 587px; padding-left: 23px; background: #fff; box-shadow: 8px 8px 22px rgba(0,0,0,.4); }
.track { width: 7px; height: 405px; margin-top: 127px; padding-top: 33px; background: linear-gradient(#eee, #eee) center / 3px 100% no-repeat; }
.thumb { width: 7px; height: 86px; border-radius: 4px; background: #fb912e; }
.offices { margin-left: 35px; padding-top: 57px; }
.offices h2 { --cond: .822; height: 34px; line-height: 34px; font-size: 24px; color: #004f86; }
.office { display: flex; height: 24px; line-height: 24px; font-weight: bold; }
.office em { width: 43px; font-size: 20px; color: #004f86; }
.office a { --cond: .753; line-height: 25px; font-size: 19px; color: #fb912e; }
.office-1 { margin-top: 32px; }
.office-1 em { color: #fb912e; }
.details { margin-top: 12px; font-size: 14.200px; color: #6680b3; }
.details li { display: flex; height: 26.500px; align-items: center; gap: 13px; }
.office-2 { margin-top: 35px; }
.office-3 { margin-top: 24px; }
.office-4 { margin-top: 21px; }

.services { display: flex; height: 65px; padding: 20px 0 0 150px; background: #004f86; color: #fff; font-size: 18px; font-weight: bold; }
.sv { display: flex; height: 24px; align-items: center; border-left: 1px solid #1a5f97; }
.sv span { --cond: .791; line-height: 22px; }
.sv-1 { width: 284px; padding-left: 19px; gap: 6px; }
.sv-2 { width: 329px; padding-left: 25px; gap: 4px; }
.sv-3 { width: 285px; padding-left: 26px; gap: 7px; }
.sv-4 { width: 198px; padding-left: 28px; gap: 5px; }
.sv-5 { width: 151px; padding-left: 28px; gap: 7px; }
.sv-6 { padding-left: 131px; gap: 10px; color: #fb912e; }

.footer { display: flex; height: 126px; padding-left: 149px; background: #ebecee; }
.footer-logo { margin-top: 43px; }
.ask { width: 205px; height: 43px; margin: 41px 0 0 62px; border-radius: 2px; background: #f39200; color: #fff; font-size: 17.500px; font-weight: bold; font-style: italic; line-height: 42px; text-align: center; }
.legal { --cond: .853; display: flex; width: 614px; margin: 53px 0 0 71px; gap: 34px; font-size: 14px; line-height: 18px; color: #6680b3; }
.social { display: flex; gap: 17.300px; margin-top: 46px; }
.credit { display: flex; margin: 51px 0 0 75px; color: #004f86; }
.credit-text { width: 118px; font: 13.600px/24px "Open Sans", sans-serif; }
.credit b { margin-left: 8px; font: 800 12.400px/14px "Open Sans", sans-serif; }
```
